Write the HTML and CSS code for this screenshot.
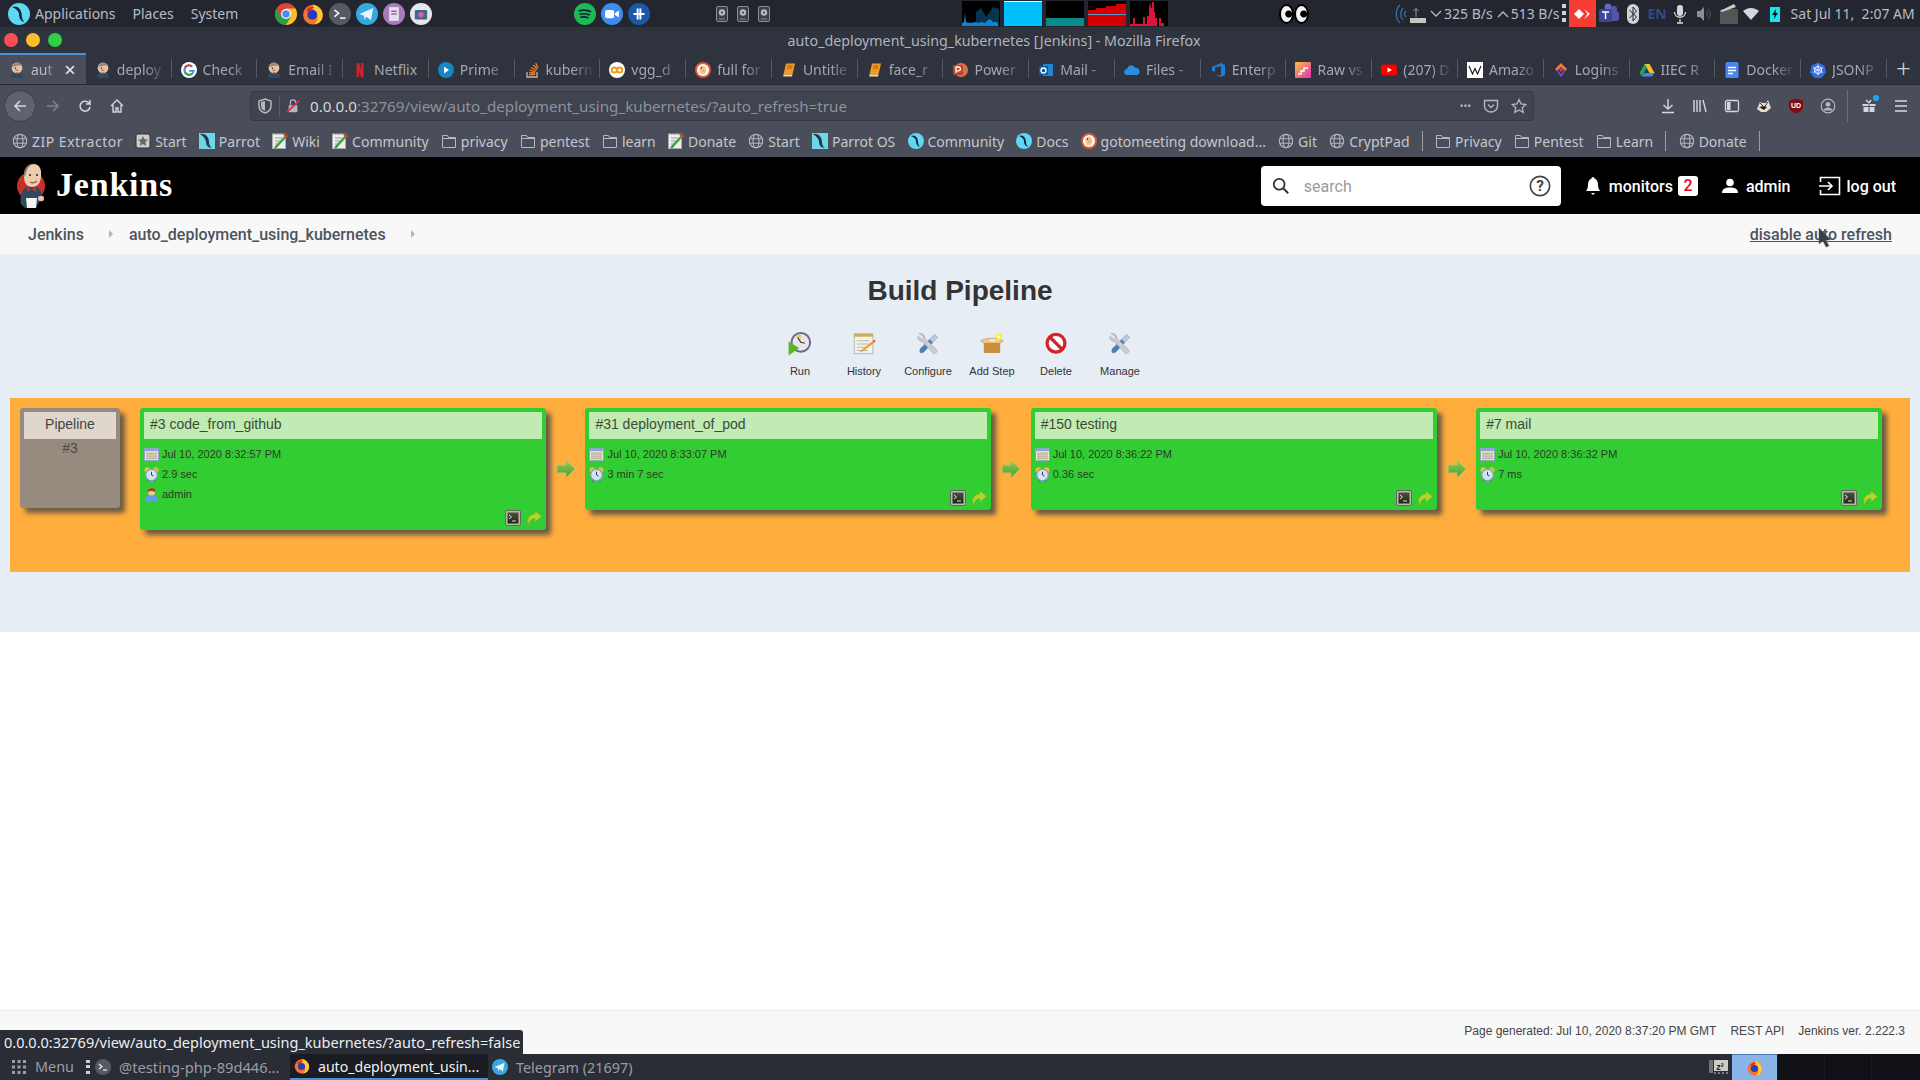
FILE: index.html
```html
<!DOCTYPE html>
<html lang="en">
<head>
<meta charset="utf-8">
<title>auto_deployment_using_kubernetes [Jenkins]</title>
<link rel="stylesheet" href="styles.css">
</head>
<body>
<svg class="defs" width="0" height="0" aria-hidden="true">
  <symbol id="firefox" viewBox="0 0 16 16"><circle cx="8" cy="8.5" r="7.2" fill="#f5742b"/><path d="M8 1c4 1 7 4 7 8 0 3-2 6-6 6.500C12 13 12 10 10 8 9 7 8 5 8 1z" fill="#ffca2e"/><circle cx="7.500" cy="8.500" r="3.600" fill="#2a3bb8"/><path d="M3 6c1-3 4-4 6-3-2 1-3 2-3 3z" fill="#e0262f"/></symbol>
  <symbol id="chrome" viewBox="0 0 16 16"><circle cx="8" cy="8" r="8" fill="#db4437"/><path d="M8 16a8 8 0 0 0 6.900-12H8z" fill="#fbc02d"/><path d="M1 4a8 8 0 0 0 7 12l3.500-6H4.500z" fill="#2e9e48"/><circle cx="8" cy="8" r="3.600" fill="#fff"/><circle cx="8" cy="8" r="2.700" fill="#4a8af4"/></symbol>
  <symbol id="term" viewBox="0 0 16 16"><circle cx="8" cy="8" r="8" fill="#565960"/><path d="M4 5l3 2.500L4 10" stroke="#eee" stroke-width="1.200" fill="none"/><path d="M8 11h4" stroke="#eee" stroke-width="1.200"/></symbol>
  <symbol id="telegram" viewBox="0 0 16 16"><circle cx="8" cy="8" r="8" fill="#36a9e1"/><path d="M2.500 8l10-4.300-1.600 8.800L7.500 10 6.200 12.200 5.800 9.300z" fill="#e8f4fb"/></symbol>
  <symbol id="notes" viewBox="0 0 16 16"><circle cx="8" cy="8" r="8" fill="#a77bbd"/><rect x="4.500" y="3" width="7" height="10" fill="#e8def0"/><path d="M6 6h4M6 8h4" stroke="#8a6a9c"/></symbol>
  <symbol id="camera" viewBox="0 0 16 16"><circle cx="8" cy="8" r="8" fill="#e7e7e7"/><rect x="3.500" y="5" width="9" height="7" rx="1" fill="#3b6a96"/><circle cx="8" cy="8.500" r="2" fill="#e35f8c"/></symbol>
  <symbol id="spotify" viewBox="0 0 16 16"><circle cx="8" cy="8" r="8" fill="#1db954"/><path d="M3.500 5.800c3-1 6-.8 9 .6M4 8.200c2.500-.7 5-.5 7.500.6M4.500 10.400c2-.5 4-.4 6 .5" stroke="#123" stroke-width="1.200" fill="none"/></symbol>
  <symbol id="zoom" viewBox="0 0 16 16"><circle cx="8" cy="8" r="8" fill="#3d8df0"/><rect x="3" y="5" width="6.500" height="6" rx="1.200" fill="#fff"/><path d="M10 7.500l3-2v5l-3-2z" fill="#fff"/></symbol>
  <symbol id="team" viewBox="0 0 16 16"><circle cx="8" cy="8" r="8" fill="#1d57a8"/><path d="M7 4v8M9 4v8M4 8h8" stroke="#fff" stroke-width="1.400"/></symbol>
  <symbol id="disk" viewBox="0 0 12 16"><rect x=".5" y=".5" width="11" height="15" rx="1.500" fill="#3b3f48" stroke="#8a8e96"/><circle cx="6" cy="6.500" r="3.200" fill="#b6b9bf"/><circle cx="6" cy="6.500" r="1" fill="#3b3f48"/><path d="M3 13h6" stroke="#8a8e96"/></symbol>
  <symbol id="parrot-round" viewBox="0 0 16 16"><circle cx="8" cy="8" r="8" fill="#5fd8f5"/><path d="M3 3c4-2 7 2 7 6 0 2 1 4 2 5-3-1-4-3-4-6 0-2-2-4-5-5z" fill="#14202c"/></symbol>
  <symbol id="parrot-square" viewBox="0 0 16 16"><rect width="16" height="16" fill="#6fd6e8"/><path d="M1 1c6-1 9 4 9 8 0 2 1 5 3 6-4 0-6-3-6-6 0-3-3-6-6-8z" fill="#1d3c4c"/></symbol>
  <symbol id="globe" viewBox="0 0 16 16"><g fill="none" stroke="#b4b7be" stroke-width="1.100"><circle cx="8" cy="8" r="6.700"/><ellipse cx="8" cy="8" rx="3" ry="6.700"/><path d="M1.500 5.800h13M1.500 10.200h13"/></g></symbol>
  <symbol id="folder" viewBox="0 0 16 16"><path d="M1.500 2.500h5l1 2h7v10h-13z" fill="none" stroke="#b4b7be"/><path d="M1.500 5.500h13" stroke="#b4b7be"/></symbol>
  <symbol id="start" viewBox="0 0 16 16"><rect x="1" y="1" width="14" height="14" rx="2" fill="#ccc" stroke="#333"/><path d="M8 3l1.500 3.300 3.500.4-2.600 2.400.7 3.600L8 11l-3.100 1.700.7-3.600L3 6.700l3.500-.4z" fill="#666"/></symbol>
  <symbol id="wiki" viewBox="0 0 16 16"><rect x="0.500" y="1" width="13" height="14.500" fill="#eee" stroke="#aaa"/><path d="M3 5h7M3 8h5M3 11h4" stroke="#999"/><path d="M3 15L14 3" stroke="#3da33d" stroke-width="2.500"/><path d="M12 .5l3.500 3.500" stroke="#d33" stroke-width="2.500"/></symbol>
  <symbol id="ddg" viewBox="0 0 16 16"><circle cx="8" cy="8" r="8" fill="#de5833"/><circle cx="8" cy="8" r="6" fill="#fff"/><ellipse cx="7.800" cy="8" rx="3.500" ry="4.500" fill="#f3c79a"/><path d="M6 8h4l-1 1.500H7z" fill="#f2a82a"/><circle cx="6.500" cy="6" r=".8" fill="#123"/></symbol>
  <symbol id="jenkins" viewBox="0 0 16 16"><path d="M2 16c0-4 2-6 6-6s6 2 6 6z" fill="#2b4a66"/><circle cx="8" cy="6" r="5.400" fill="#e3c3a5"/><path d="M3 5c1-5 9-5 10-1-3-1-6 0-10 1z" fill="#9a8473"/><path d="M6.500 10.500l1.500 2 1.500-2z" fill="#c0322d"/><circle cx="6.500" cy="6.200" r=".7" fill="#222"/><path d="M6.500 8.300h3" stroke="#a5664f"/></symbol>
  <symbol id="g" viewBox="0 0 16 16"><circle cx="8" cy="8" r="8" fill="#fff"/><path d="M14 8H8.200v1.800h3.400A3.700 3.700 0 1 1 10.500 5.300l1.300-1.300A5.600 5.600 0 1 0 13.600 9z" fill="#4a85f0"/><path d="M4.600 5.500A4 4 0 0 1 10.500 5.300l1.300-1.300A5.600 5.600 0 0 0 3 5z" fill="#e54335"/><path d="M3 10.800l1.700-1.200a4 4 0 0 0 5.800 1.500l1.300 1.300a5.600 5.600 0 0 1-8.800-1.600z" fill="#2fa84f"/></symbol>
  <symbol id="netflix" viewBox="0 0 16 16"><path d="M4.500 1h2.600l2 7V1h2.400v14.500l-2.600-.5-2-7v6.700l-2.400.3z" fill="#d81f26"/></symbol>
  <symbol id="prime" viewBox="0 0 16 16"><circle cx="8" cy="8" r="8" fill="#1487c5"/><path d="M6 4.500l5 3.500-5 3.500z" fill="#fff"/></symbol>
  <symbol id="so" viewBox="0 0 16 16"><path d="M3 10v5h10v-5" fill="none" stroke="#bbb" stroke-width="1.300"/><path d="M5 12.500h6M5.200 10.300l6 .8M5.900 8l5.600 2M7.300 5.500l5 3.200M9.400 3l3.800 4.400M11.800 1l2 5" stroke="#f48024" stroke-width="1.300"/></symbol>
  <symbol id="colab" viewBox="0 0 16 16"><circle cx="8" cy="8" r="8" fill="#fff"/><g fill="none" stroke="#f29c1f" stroke-width="2"><circle cx="5.300" cy="8" r="2.600"/><circle cx="10.700" cy="8" r="2.600"/></g></symbol>
  <symbol id="book" viewBox="0 0 16 16"><path d="M5 1.500h9l-2.500 11H2.500z" fill="#f29a25"/><path d="M2.500 12.500h9l-.5 2H2.300z" fill="#ffd9a0"/><path d="M6.500 4h5M6 6h5" stroke="#a85f10"/></symbol>
  <symbol id="ppt" viewBox="0 0 16 16"><circle cx="9" cy="8" r="7" fill="#e0703f"/><rect x="1" y="3" width="10" height="10" rx="1" fill="#b7472a"/><path d="M4 11V5h2.500a1.800 1.800 0 0 1 0 3.800H4" fill="none" stroke="#fff" stroke-width="1.300"/></symbol>
  <symbol id="outlook" viewBox="0 0 16 16"><rect x="5" y="2" width="10" height="12" fill="#1f86d6"/><rect x="1" y="4" width="9" height="9" fill="#0f5fa8"/><circle cx="5.500" cy="8.500" r="2.500" fill="none" stroke="#fff" stroke-width="1.300"/></symbol>
  <symbol id="cloud" viewBox="0 0 16 16"><path d="M3.500 13A3 3 0 0 1 3 7a4.500 4.500 0 0 1 8.500-1A3.500 3.500 0 0 1 12.500 13z" fill="#2a8fe0"/></symbol>
  <symbol id="azure" viewBox="0 0 16 16"><path d="M15 3v10l-4 2-6-2 6 .8V4L5 5.500V10l-3-1.200V5l9-4z" fill="#1f7fd4"/></symbol>
  <symbol id="raw" viewBox="0 0 16 16"><defs><linearGradient id="rg" x1="0" y1="0" x2="1" y2="1"><stop offset="0" stop-color="#f9c33a"/><stop offset="1" stop-color="#e22fb8"/></linearGradient></defs><rect width="16" height="16" rx="1" fill="url(#rg)"/><path d="M3 12h3V9h3V6h4" stroke="#fff" stroke-width="1.400" fill="none"/></symbol>
  <symbol id="yt" viewBox="0 0 16 16"><rect y="2.500" width="16" height="11" rx="3" fill="#f00"/><path d="M6.500 5.500l4.500 2.500-4.500 2.500z" fill="#fff"/></symbol>
  <symbol id="wikip" viewBox="0 0 16 16"><rect width="16" height="16" fill="#fff"/><path d="M2 4l3.500 8L8 6.500 10.500 12 14 4" fill="none" stroke="#111" stroke-width="1.100"/></symbol>
  <symbol id="logins" viewBox="0 0 16 16"><path d="M8 1l6 6-2 2-4-4-4 4-2-2z" fill="#f27a3a"/><path d="M2 7l6 8 6-8-2 1-4 4-4-4z" fill="#6c52d9"/><circle cx="8" cy="8" r="1.800" fill="#e0323c"/></symbol>
  <symbol id="drive" viewBox="0 0 16 16"><path d="M5.500 2h5l5 9h-5z" fill="#f6c02d"/><path d="M5.500 2L.5 11l2.500 3.500 5-9z" fill="#1fa463"/><path d="M3 14.500h10l2.500-3.500H5.500z" fill="#4a85f0"/></symbol>
  <symbol id="docs" viewBox="0 0 16 16"><rect x="1.500" width="13" height="16" rx="1.500" fill="#4a85f0"/><path d="M4 5.500h8M4 8.500h8M4 11.500h5" stroke="#fff" stroke-width="1.500"/></symbol>
  <symbol id="k8s" viewBox="0 0 16 16"><path d="M8 .5l6.500 3 1.500 7-4.500 5.500h-7L0 10.500l1.500-7z" fill="#326de6"/><circle cx="8" cy="8" r="3.500" fill="none" stroke="#fff"/><path d="M8 2.500v11M3 5.500l10 5M13 5.500l-10 5" stroke="#fff" stroke-width=".8"/></symbol>
  <symbol id="chev" viewBox="0 0 12 8"><path d="M1 1l5 5 5-5" fill="none" stroke="#b8bcc5" stroke-width="1.300"/></symbol>
  <symbol id="cal" viewBox="0 0 16 16"><rect x=".5" y="1.500" width="15" height="13" fill="#f3efe2" stroke="#8da0c4"/><rect x=".5" y="1.500" width="15" height="3" fill="#8fa3d0"/><path d="M2 6.500h12M2 8.500h12M2 10.500h12M2 12.500h12" stroke="#a09577"/></symbol>
  <symbol id="clock" viewBox="0 0 16 16"><path d="M4 15.500l1.500-3M12 15.500l-1.500-3" stroke="#4a6a94" stroke-width="1.500"/><circle cx="3.500" cy="3.200" r="3" fill="#f0b93a"/><circle cx="12.500" cy="3.200" r="3" fill="#f0b93a"/><circle cx="8" cy="8.500" r="6.200" fill="#d4e3f2" stroke="#7ea0c8" stroke-width="1.400"/><path d="M8 5v3.500l2 1.200" stroke="#333" fill="none"/></symbol>
  <symbol id="user" viewBox="0 0 16 16"><path d="M1 15.500c0-5 2-7.500 7-7.500s7 2.500 7 7.500z" fill="#5f9ee6"/><circle cx="8" cy="5" r="4" fill="#eec29a"/><path d="M3.800 5.500C3 0 13-1 12.200 5.500 10 3.800 6 3.800 3.800 5.500z" fill="#8a4a1c"/></symbol>
  <symbol id="console" viewBox="0 0 16 16"><defs><linearGradient id="cg" x1="0" y1="0" x2="0" y2="1"><stop offset="0" stop-color="#4a5530"/><stop offset="1" stop-color="#1e2412"/></linearGradient></defs><rect x=".5" y=".5" width="15" height="15" rx="1.500" fill="#b9bab2" stroke="#666"/><rect x="2.500" y="2.500" width="11" height="11" fill="url(#cg)"/><path d="M4 5l2.500 2L4 9" stroke="#ddd" fill="none"/><path d="M7 11h4" stroke="#ddd"/></symbol>
  <symbol id="rerun" viewBox="0 0 16 16"><path d="M9 1L15.500 6.500 9 12V8.500C6 8.500 3.500 10.500 2.500 15 0 8.500 4 4 9 4z" fill="#b3d62e" stroke="#86b41f" stroke-width=".7"/></symbol>
  <symbol id="flow" viewBox="0 0 20 20"><defs><linearGradient id="fg" x1="0" y1="0" x2="0" y2="1"><stop offset="0" stop-color="#93cc5e"/><stop offset="1" stop-color="#4c9a28"/></linearGradient></defs><path d="M1 6h9V1l9 9-9 9v-5H1z" fill="url(#fg)" stroke="#b3c46c"/></symbol>
  <symbol id="wrench" viewBox="0 0 32 32"><path d="M24 4l4 4-16 17c-1 2-5 3-6 1s0-5 2-6z" fill="#4c80ba"/><path d="M24 4l4 4-6 6-4-4z" fill="#c3c8ce"/><path d="M5 3c4-1 8 2 7 6l15 14c1 3-2 6-5 4L9 13C5 13 2 9 4 6l4 4 3-3z" fill="#c9ccd0" stroke="#9ba0a6" stroke-width=".6"/></symbol>
</svg>

<div class="screen">
  <header class="panel">
    <div class="panel-menu">
      <svg class="logo-parrot"><use href="#parrot-round"/></svg>
      <span>Applications</span><span>Places</span><span>System</span>
    </div>
    <div class="launch launch-a">
      <svg class="i22"><use href="#chrome"/></svg><svg class="i22"><use href="#firefox"/></svg><svg class="i22"><use href="#term"/></svg><svg class="i22"><use href="#telegram"/></svg><svg class="i22"><use href="#notes"/></svg><svg class="i22"><use href="#camera"/></svg>
    </div>
    <div class="launch launch-b">
      <svg class="i22"><use href="#spotify"/></svg><svg class="i22"><use href="#zoom"/></svg><svg class="i22"><use href="#team"/></svg>
    </div>
    <div class="disks">
      <svg class="disk"><use href="#disk"/></svg><svg class="disk"><use href="#disk"/></svg><svg class="disk"><use href="#disk"/></svg>
    </div>
    <div class="graphs">
      <svg class="graph" viewBox="0 0 38 25"><path d="M14 22V11l5-4 5 9 7-10 6 2v17z" fill="#0e5f8c" opacity=".55"/><path d="M0 25V22l2-1 1-9 1 9 4 1 6-1 2 1 4-1 3 1 3-3 2-1 3 3 3 0 2 1v3z" fill="#0e83d0"/></svg>
      <svg class="graph graph-blue" viewBox="0 0 38 25"><rect width="38" height="24" y="1" fill="#00bfff"/></svg>
      <svg class="graph" viewBox="0 0 38 25"><rect y="17" width="38" height="8" fill="#0b8a8a"/></svg>
      <svg class="graph" viewBox="0 0 38 25"><path d="M0 9h8V7h10V5h10V3h10v22H0z" fill="#d40000"/><rect y="13" width="38" height="1" fill="#5a9ad0"/></svg>
      <svg class="graph" viewBox="0 0 38 25"><path d="M0 25V23h3v-6h2v6h8v-7h2v7h2v-8h2V7l1-6 1 6h1V1h2v10h1v6h2v8h2v-8h2v5h3v4h2v2z" fill="#dc143c"/></svg>
    </div>
    <div class="eyes"><span class="eye"></span><span class="eye"></span></div>
    <div class="tray">
      <svg class="tray-signal" viewBox="0 0 34 24"><path d="M8 3c-5 5-5 13 0 18M11 6c-3 4-3 9 0 12M14 9c-2 2-2 4 0 6" stroke="#3a6ea8" stroke-width="1.300" fill="none"/><rect x="18" y="16" width="16" height="5" fill="#c3c6b8"/><path d="M24 15V6M21 9c2-2 4-2 6 0" stroke="#999" fill="none"/></svg>
      <svg class="chev"><use href="#chev"/></svg><span>325 B/s</span>
      <svg class="chev chev-up"><use href="#chev"/></svg><span>513 B/s</span>
      <span class="tray-dots"></span>
      <span class="anydesk"><svg viewBox="0 0 20 12" class="anydesk-mark"><path d="M6 1l5 5-5 5-5-5z" fill="#fff"/><path d="M11 1l6 5-6 5 3.500-5z" fill="#fff"/></svg></span>
      <svg class="tray-teams" viewBox="0 0 22 22"><circle cx="16" cy="6" r="3" fill="#4f58a8"/><circle cx="10" cy="4" r="3.500" fill="#5f68c0"/><rect x="11" y="8" width="10" height="10" rx="3" fill="#4f58a8"/><rect x="1" y="6" width="13" height="13" rx="1.500" fill="#3d4696"/><path d="M4 9h7M7.500 9v7" stroke="#fff" stroke-width="1.400"/></svg>
      <svg class="tray-bt" viewBox="0 0 12 20"><rect width="12" height="20" rx="6" fill="#cfd1d6"/><path d="M2.500 6l7 7-3.500 4V3l3.500 4-7 7" fill="none" stroke="#23262e"/></svg>
      <b class="tray-en">EN</b>
      <svg class="tray-mic" viewBox="0 0 14 20"><rect x="4" y="1" width="6" height="11" rx="3" fill="#d5d7dc"/><path d="M1.500 8c0 7 11 7 11 0M7 15v4M4 19h6" stroke="#d5d7dc" fill="none" stroke-width="1.300"/></svg>
      <svg class="tray-vol" viewBox="0 0 16 16"><path d="M1 5h3l4-4v14l-4-4H1z" fill="#8a8d94"/><path d="M10 5c2 2 2 4 0 6M12 3c3 3 3 7 0 10" stroke="#5c5f66" fill="none"/></svg>
      <svg class="tray-hist" viewBox="0 0 18 20"><rect y="5" width="18" height="15" rx="1.500" fill="#555"/><path d="M0 7L14 0l2 3-14 5z" fill="#ccc"/></svg>
      <svg class="tray-wifi" viewBox="0 0 16 12"><path d="M0 3c5-4 11-4 16 0l-8 9z" fill="#d5d7dc"/></svg>
      <svg class="tray-batt" viewBox="0 0 10 16"><rect y="1" width="10" height="15" fill="#15e6ee"/><path d="M6 3L2 9h2.500L4 13l4-6H5.500z" fill="#111"/></svg>
      <span class="tray-date">Sat Jul 11, &nbsp;2:07 AM</span>
    </div>
  </header>

  <div class="titlebar">
    <div class="lights"><i class="light red"></i><i class="light yellow"></i><i class="light green"></i></div>
    <div class="win-title">auto_deployment_using_kubernetes [Jenkins] - Mozilla Firefox</div>
    <div></div>
  </div>

  <nav class="tabs">
    <div class="tab tab-active"><svg class="i16"><use href="#jenkins"/></svg><span class="tab-label">aut</span><span class="tab-close">×</span></div>
    <div class="tab"><svg class="i16"><use href="#jenkins"/></svg><span class="tab-label">deploy</span></div>
    <div class="tab"><svg class="i16"><use href="#g"/></svg><span class="tab-label">Check</span></div>
    <div class="tab"><svg class="i16"><use href="#jenkins"/></svg><span class="tab-label">Email I</span></div>
    <div class="tab"><svg class="i16"><use href="#netflix"/></svg><span class="tab-label tab-plain">Netflix</span></div>
    <div class="tab"><svg class="i16"><use href="#prime"/></svg><span class="tab-label">Prime</span></div>
    <div class="tab"><svg class="i16"><use href="#so"/></svg><span class="tab-label">kubern</span></div>
    <div class="tab"><svg class="i16"><use href="#colab"/></svg><span class="tab-label">vgg_d</span></div>
    <div class="tab"><svg class="i16"><use href="#ddg"/></svg><span class="tab-label">full for</span></div>
    <div class="tab"><svg class="i16"><use href="#book"/></svg><span class="tab-label">Untitle</span></div>
    <div class="tab"><svg class="i16"><use href="#book"/></svg><span class="tab-label">face_r</span></div>
    <div class="tab"><svg class="i16"><use href="#ppt"/></svg><span class="tab-label">Power</span></div>
    <div class="tab"><svg class="i16"><use href="#outlook"/></svg><span class="tab-label">Mail -</span></div>
    <div class="tab"><svg class="i16"><use href="#cloud"/></svg><span class="tab-label">Files -</span></div>
    <div class="tab"><svg class="i16"><use href="#azure"/></svg><span class="tab-label">Enterp</span></div>
    <div class="tab"><svg class="i16"><use href="#raw"/></svg><span class="tab-label">Raw vs</span></div>
    <div class="tab"><svg class="i16"><use href="#yt"/></svg><span class="tab-label">(207) D</span></div>
    <div class="tab"><svg class="i16"><use href="#wikip"/></svg><span class="tab-label">Amazo</span></div>
    <div class="tab"><svg class="i16"><use href="#logins"/></svg><span class="tab-label">Logins</span></div>
    <div class="tab"><svg class="i16"><use href="#drive"/></svg><span class="tab-label">IIEC R</span></div>
    <div class="tab"><svg class="i16"><use href="#docs"/></svg><span class="tab-label">Docker</span></div>
    <div class="tab"><svg class="i16"><use href="#k8s"/></svg><span class="tab-label">JSONP</span></div>
    <div class="tab-new">+</div>
  </nav>

  <div class="navbar">
    <span class="back"><svg viewBox="0 0 16 16" class="nav-i"><path d="M14 8H3M8 3L3 8l5 5" fill="none" stroke="#d5d7dc" stroke-width="1.600"/></svg></span>
    <svg viewBox="0 0 16 16" class="nav-i nav-dim"><path d="M2 8h11M8 3l5 5-5 5" fill="none" stroke="#80838c" stroke-width="1.600"/></svg>
    <svg viewBox="0 0 16 16" class="nav-i"><path d="M13 9a5 5 0 1 1-1.500-4.500L13 6V2M13 6H9" fill="none" stroke="#d5d7dc" stroke-width="1.500"/></svg>
    <svg viewBox="0 0 16 16" class="nav-i"><path d="M2 8l6-6 6 6M4 7v7h3v-4h2v4h3V7" fill="none" stroke="#d5d7dc" stroke-width="1.400"/></svg>
    <div class="urlbar">
      <svg viewBox="0 0 16 16" class="url-shield"><path d="M8 1l6 2v5c0 4-3 6-6 7-3-1-6-3-6-7V3z" fill="none" stroke="#b4b7be" stroke-width="1.500"/><path d="M8 3v10c-2-1-4-2-4-5V4z" fill="#b4b7be"/></svg>
      <span class="url-sep"></span>
      <svg viewBox="0 0 16 16" class="url-lock"><rect x="3" y="7" width="10" height="8" rx="1" fill="#b4b7be"/><path d="M5 7V4a3 3 0 0 1 6 0v3" stroke="#b4b7be" fill="none" stroke-width="1.400"/><path d="M1 15L15 2" stroke="#e22850" stroke-width="2"/></svg>
      <span class="url-text"><span class="url-host">0.0.0.0</span>:32769/view/auto_deployment_using_kubernetes/?auto_refresh=true</span>
      <span class="url-more">•••</span>
      <svg viewBox="0 0 16 16" class="url-act"><path d="M1.500 2.500h13V8a6.500 6 0 0 1-13 0z" fill="none" stroke="#b4b7be" stroke-width="1.400"/><path d="M5 6.500l3 3 3-3" fill="none" stroke="#b4b7be" stroke-width="1.400"/></svg>
      <svg viewBox="0 0 16 16" class="url-act"><path d="M8 1.500l2 4.500 4.800.5-3.600 3.200 1 4.800L8 12l-4.200 2.500 1-4.800L1.200 6.500 6 6z" fill="none" stroke="#b4b7be" stroke-width="1.300"/></svg>
    </div>
    <div class="tools">
      <svg viewBox="0 0 16 16" class="tool"><path d="M8 1v10M3.500 7L8 11l4.500-4M2 14.500h12" fill="none" stroke="#d5d7dc" stroke-width="1.400"/></svg>
      <svg viewBox="0 0 16 16" class="tool"><path d="M2 2v12M5 2v12M8 2v12M11 2l3 12" fill="none" stroke="#d5d7dc" stroke-width="1.400"/></svg>
      <svg viewBox="0 0 16 16" class="tool"><rect x="1.500" y="2.500" width="13" height="11" rx="1.500" fill="none" stroke="#d5d7dc" stroke-width="1.300"/><rect x="3" y="4" width="3.500" height="8" fill="#d5d7dc"/></svg>
      <svg viewBox="0 0 16 16" class="tool"><path d="M1 11L4 4l2 1h4l2-3 3 8-5 4H5z" fill="#e8e0cf"/><path d="M3 9l5-1 3 1-3 3z" fill="#222"/><path d="M4 5l3 3M12 4L9 8" stroke="#333"/></svg>
      <svg viewBox="0 0 16 16" class="tool"><path d="M8 .5l7 2.300V9c0 3-3 5-7 6.500C4 14 1 12 1 9V2.800z" fill="#7d0f13"/><text x="8" y="10" class="ublock">UD</text></svg>
      <svg viewBox="0 0 16 16" class="tool"><circle cx="8" cy="8" r="6.800" fill="none" stroke="#b4b7be" stroke-width="1.200"/><circle cx="8" cy="6.300" r="2.400" fill="#b4b7be"/><path d="M3.500 12.500c1-4 8-4 9 0z" fill="#b4b7be"/></svg>
      <span class="tool-sep"></span>
      <span class="gift"><svg viewBox="0 0 16 16" class="tool"><path d="M1.500 6h6v2h-6zM8.500 6h6v2h-6zM2.500 9h5v5h-5zM8.500 9h5v5h-5z" fill="#d5d7dc"/><path d="M8 5L5 2M8 5l2-3" stroke="#d5d7dc" stroke-width="1.400"/></svg><i class="gift-dot"></i></span>
      <svg viewBox="0 0 16 16" class="tool"><path d="M2 3h12M2 8h12M2 13h12" stroke="#d5d7dc" stroke-width="1.500"/></svg>
    </div>
  </div>

  <div class="bookmarks">
    <span class="bm bm-zip"><svg class="i16"><use href="#globe"/></svg>ZIP Extractor</span>
    <span class="bm"><svg class="i16"><use href="#start"/></svg>Start</span>
    <span class="bm"><svg class="i16"><use href="#parrot-square"/></svg>Parrot</span>
    <span class="bm"><svg class="i16"><use href="#wiki"/></svg>Wiki</span>
    <span class="bm"><svg class="i16"><use href="#wiki"/></svg>Community</span>
    <span class="bm"><svg class="i16"><use href="#folder"/></svg>privacy</span>
    <span class="bm"><svg class="i16"><use href="#folder"/></svg>pentest</span>
    <span class="bm"><svg class="i16"><use href="#folder"/></svg>learn</span>
    <span class="bm"><svg class="i16"><use href="#wiki"/></svg>Donate</span>
    <span class="bm"><svg class="i16"><use href="#globe"/></svg>Start</span>
    <span class="bm"><svg class="i16"><use href="#parrot-square"/></svg>Parrot OS</span>
    <span class="bm"><svg class="i16"><use href="#parrot-round"/></svg>Community</span>
    <span class="bm"><svg class="i16"><use href="#parrot-round"/></svg>Docs</span>
    <span class="bm"><svg class="i16"><use href="#ddg"/></svg>gotomeeting download...</span>
    <span class="bm"><svg class="i16"><use href="#globe"/></svg>Git</span>
    <span class="bm"><svg class="i16"><use href="#globe"/></svg>CryptPad</span>
    <i class="bm-sep"></i>
    <span class="bm"><svg class="i16"><use href="#folder"/></svg>Privacy</span>
    <span class="bm"><svg class="i16"><use href="#folder"/></svg>Pentest</span>
    <span class="bm"><svg class="i16"><use href="#folder"/></svg>Learn</span>
    <i class="bm-sep"></i>
    <span class="bm"><svg class="i16"><use href="#globe"/></svg>Donate</span>
    <i class="bm-sep"></i>
  </div>

  <div class="jk-header">
    <svg class="jk-logo" viewBox="0 0 30 46">
      <circle cx="15" cy="23" r="14" fill="#c5302a"/>
      <path d="M5 41c-2-9 2-18 10-18s12 6 12 15l-4 1-3 6H9z" fill="#2f4a60"/>
      <path d="M8 14C8 5 13 1 18 1s8 5 7 12c0 6-3 11-9 11-5 0-8-4-8-10z" fill="#eccdb0"/>
      <path d="M8 14C7 5 13 0 18 1c-4 1-6 3-7 6-1 2-1 5-3 7z" fill="#8f7a6b"/>
      <circle cx="14" cy="12" r="1" fill="#222"/><circle cx="21" cy="12" r="1" fill="#222"/>
      <path d="M14 19c2 1 5 1 7-1" stroke="#9b5b46" fill="none" stroke-width="1.200"/>
      <path d="M15 26l-4-2v5zM15 26l5-2v5z" fill="#c5302a"/>
      <path d="M10 35h11l-1 10H11z" fill="#f4f4f0"/>
      <rect x="22" y="33" width="6" height="5" rx="2" fill="#e9c7ab"/>
    </svg>
    <span class="jk-brand">Jenkins</span>
    <div class="jk-search">
      <svg viewBox="0 0 20 20" class="jk-search-i"><circle cx="8" cy="8" r="6" fill="none" stroke="#333" stroke-width="2"/><path d="M12.500 12.500L18 18" stroke="#333" stroke-width="2.200"/></svg>
      <span class="jk-placeholder">search</span>
      <svg viewBox="0 0 20 20" class="jk-help"><circle cx="10" cy="10" r="8.800" fill="none" stroke="#444" stroke-width="1.500"/><text x="10" y="14.500" class="jk-help-q">?</text></svg>
    </div>
    <div class="jk-links">
      <span class="jk-link jk-monitors"><svg viewBox="0 0 16 20" class="jk-i"><path d="M8 1c1 0 1.500.8 1.500 1.500C12 3.500 13 6 13 9c0 3 1 4.500 2 6H1c1-1.500 2-3 2-6 0-3 1-5.500 3.500-6.500C6.500 1.800 7 1 8 1z" fill="#fff"/><path d="M6 17h4l-2 2z" fill="#fff"/></svg>monitors<span class="jk-badge">2</span></span>
      <span class="jk-link jk-admin"><svg viewBox="0 0 16 16" class="jk-i"><circle cx="8" cy="4.500" r="3.800" fill="#fff"/><path d="M0 15c0-4 3-5.500 8-5.500s8 1.500 8 5.500z" fill="#fff"/></svg>admin</span>
      <span class="jk-link jk-logout"><svg viewBox="0 0 22 20" class="jk-i-out"><path d="M1.500 6V1.500h19v17h-19V14" fill="none" stroke="#fff" stroke-width="1.600"/><path d="M0 10h13M9 6l4 4-4 4" fill="none" stroke="#fff" stroke-width="1.600"/></svg>log out</span>
    </div>
  </div>

  <div class="crumbs">
    <a class="crumb">Jenkins</a><i class="crumb-arrow"></i>
    <a class="crumb">auto_deployment_using_kubernetes</a><i class="crumb-arrow"></i>
    <a class="crumb-right">disable auto refresh</a>
    <svg class="cursor" viewBox="0 0 12 20"><path d="M1 0v16l4-3 3 6 3-1-3-6h5z" fill="#3a3d42" stroke="#666" stroke-width=".5"/></svg>
  </div>

  <main class="content">
    <h1 class="pl-title">Build Pipeline</h1>
    <div class="actions">
      <div class="action">
        <svg viewBox="0 0 32 32" class="action-i"><circle cx="17" cy="14" r="11.500" fill="#e8e6ea" stroke="#6b6a8e" stroke-width="2.500"/><path d="M17 14L11 6a10 10 0 0 1 6-2z" fill="#e8c96a"/><path d="M13 8l4 6 5 1" stroke="#333" fill="none" stroke-width="1.300"/><path d="M2 13l13 8-13 9z" fill="#56b81e"/></svg>
        <span>Run</span>
      </div>
      <div class="action">
        <svg viewBox="0 0 32 32" class="action-i"><rect x="4" y="4" width="23" height="24" fill="#f4f1e8" stroke="#aaa"/><rect x="4" y="3" width="23" height="4" fill="#c8ae55"/><path d="M7 12h16M7 16h16M7 20h10M7 24h14" stroke="#aaa"/><path d="M13 23l-2 3 4-1 14-11-2-2z" fill="#e8a23a"/><path d="M27 12l2 2 1-2-1-1z" fill="#d33"/></svg>
        <span>History</span>
      </div>
      <div class="action">
        <svg class="action-i"><use href="#wrench"/></svg>
        <span>Configure</span>
      </div>
      <div class="action">
        <svg viewBox="0 0 32 32" class="action-i"><path d="M6 13h20v14H6z" fill="#d9a45a"/><path d="M2 12l8-3h12l8 3-4 3H6z" fill="#efc98c" stroke="#a97a38" stroke-width=".6"/><rect x="6" y="15" width="20" height="12" fill="#c98e3e"/><rect x="13" y="10" width="7" height="3" fill="#f7e7c5"/><circle cx="24" cy="7" r="4" fill="#f7ea3c"/><circle cx="24" cy="7" r="2" fill="#fffbd0"/></svg>
        <span>Add Step</span>
      </div>
      <div class="action">
        <svg viewBox="0 0 32 32" class="action-i"><circle cx="16" cy="15" r="11" fill="#fff" stroke="#d3232a" stroke-width="4"/><path d="M9 8l14 14" stroke="#d3232a" stroke-width="4"/></svg>
        <span>Delete</span>
      </div>
      <div class="action">
        <svg class="action-i"><use href="#wrench"/></svg>
        <span>Manage</span>
      </div>
    </div>

    <section class="pipeline">
      <div class="pl-head">
        <div class="pl-head-title">Pipeline</div>
        <div class="pl-head-num">#3</div>
      </div>
      <div class="pl-stages">
        <article class="stage stage-tall">
          <div class="stage-title">#3 code_from_github</div>
          <div class="stage-row"><svg class="i15"><use href="#cal"/></svg>Jul 10, 2020 8:32:57 PM</div>
          <div class="stage-row"><svg class="i15"><use href="#clock"/></svg>2.9 sec</div>
          <div class="stage-row"><svg class="i15"><use href="#user"/></svg>admin</div>
          <div class="stage-icons"><svg class="i16"><use href="#console"/></svg><svg class="i16"><use href="#rerun"/></svg></div>
        </article>
        <svg class="flow"><use href="#flow"/></svg>
        <article class="stage">
          <div class="stage-title">#31 deployment_of_pod</div>
          <div class="stage-row"><svg class="i15"><use href="#cal"/></svg>Jul 10, 2020 8:33:07 PM</div>
          <div class="stage-row"><svg class="i15"><use href="#clock"/></svg>3 min 7 sec</div>
          <div class="stage-icons"><svg class="i16"><use href="#console"/></svg><svg class="i16"><use href="#rerun"/></svg></div>
        </article>
        <svg class="flow"><use href="#flow"/></svg>
        <article class="stage">
          <div class="stage-title">#150 testing</div>
          <div class="stage-row"><svg class="i15"><use href="#cal"/></svg>Jul 10, 2020 8:36:22 PM</div>
          <div class="stage-row"><svg class="i15"><use href="#clock"/></svg>0.36 sec</div>
          <div class="stage-icons"><svg class="i16"><use href="#console"/></svg><svg class="i16"><use href="#rerun"/></svg></div>
        </article>
        <svg class="flow"><use href="#flow"/></svg>
        <article class="stage">
          <div class="stage-title">#7 mail</div>
          <div class="stage-row"><svg class="i15"><use href="#cal"/></svg>Jul 10, 2020 8:36:32 PM</div>
          <div class="stage-row"><svg class="i15"><use href="#clock"/></svg>7 ms</div>
          <div class="stage-icons"><svg class="i16"><use href="#console"/></svg><svg class="i16"><use href="#rerun"/></svg></div>
        </article>
      </div>
    </section>
  </main>

  <div class="blank"></div>

  <footer class="jk-footer">
    <span>Page generated: Jul 10, 2020 8:37:20 PM GMT</span><span>REST API</span><span>Jenkins ver. 2.222.3</span>
  </footer>

  <div class="taskbar">
    <svg class="task-grid" viewBox="0 0 14 14"><g fill="#9a9da5"><rect width="3" height="3"/><rect x="5.500" width="3" height="3"/><rect x="11" width="3" height="3"/><rect y="5.500" width="3" height="3"/><rect x="5.500" y="5.500" width="3" height="3"/><rect x="11" y="5.500" width="3" height="3"/><rect y="11" width="3" height="3"/><rect x="5.500" y="11" width="3" height="3"/><rect x="11" y="11" width="3" height="3"/></g></svg>
    <span class="task-menu">Menu</span>
    <span class="task-dots"></span>
    <span class="task task-first"><svg class="i16"><use href="#term"/></svg>@testing-php-89d446...</span>
    <span class="task task-active"><svg class="i16"><use href="#firefox"/></svg>auto_deployment_usin...</span>
    <span class="task"><svg class="i16"><use href="#telegram"/></svg>Telegram (21697)</span>
    <div class="task-right">
      <svg class="task-sleep" viewBox="0 0 20 16"><path d="M1 1v13M3 1v13" stroke="#bbb"/><rect x="5" y="1" width="14" height="11" fill="#ccc"/><text x="11" y="10.500" class="task-z">z²</text><path d="M6 13v2M10 13v2M14 13v2M18 13v2" stroke="#ccc"/></svg>
      <span class="ws ws-active"><svg class="i16"><use href="#firefox"/></svg></span>
      <span class="ws"></span><span class="ws"></span><span class="ws ws-last"></span>
    </div>
  </div>

  <div class="status-tip">0.0.0.0:32769/view/auto_deployment_using_kubernetes/?auto_refresh=false</div>
</div>
</body>
</html>
```
FILE: styles.css
```css
* { box-sizing: border-box; }
html, body { margin: 0; padding: 0; height: 100%; overflow: hidden; }
body { font-family: "Liberation Sans", Arial, sans-serif; color: #333; background: #fff; }
.defs { position: absolute; }
.screen { position: relative; width: 1920px; height: 1080px; display: flex; flex-direction: column; overflow: hidden; }
svg { display: block; flex: none; }
.i15 { width: 15px; height: 15px; }
.i16 { width: 16px; height: 16px; }
.i22 { width: 22px; height: 22px; }

/* OS panel */
.panel { height: 27px; flex: none; background: #23262e; color: #b8bcc5; display: flex; align-items: center; font: 14px "Noto Sans", sans-serif; }
.panel-menu { width: 275px; display: flex; align-items: center; padding-left: 8px; gap: 17px; }
.logo-parrot { width: 22px; height: 22px; margin-right: -12px; }
.launch { display: flex; gap: 5px; }
.launch-a { width: 299px; }
.launch-b { width: 138px; }
.disks { width: 250px; display: flex; gap: 9px; padding-left: 4px; }
.disk { width: 12px; height: 16px; }
.graphs { width: 314px; display: flex; gap: 4px; align-self: flex-start; padding-top: 1px; }
.graph { width: 38px; height: 25px; background: #000; }
.graph-blue { background: #e8f8ff; }
.eyes { width: 114px; display: flex; gap: 0; padding-left: 3px; }
.eye { width: 15px; height: 20px; border-radius: 50%; background: radial-gradient(circle at 70% 50%, #000 0 3px, #f4f4f4 4px); border: 2px solid #000; }
.tray { flex: 1; display: flex; align-items: center; }
.tray-signal { width: 34px; height: 24px; margin: 0 4px 0 2px; }
.chev { width: 12px; height: 8px; margin-right: 2px; }
.chev-up { transform: rotate(180deg); margin-left: 4px; }
.tray-dots { width: 4px; height: 20px; margin: 0 3px 0 3px; background: repeating-linear-gradient(#cfd1d6 0 4px, transparent 4px 7px); }
.anydesk { width: 27px; height: 27px; background: #f63c33; display: flex; align-items: center; justify-content: center; }
.anydesk-mark { width: 20px; height: 12px; }
.tray-teams { width: 22px; height: 22px; margin-left: 2px; }
.tray-bt { width: 12px; height: 20px; margin-left: 7px; }
.tray-en { color: #2f4a86; margin-left: 8px; font-size: 14px; }
.tray-mic { width: 14px; height: 20px; margin-left: 6px; }
.tray-vol { width: 16px; height: 16px; margin-left: 9px; }
.tray-hist { width: 18px; height: 20px; margin-left: 8px; }
.tray-wifi { width: 16px; height: 12px; margin-left: 5px; }
.tray-batt { width: 10px; height: 16px; margin-left: 11px; }
.tray-date { margin-left: 11px; white-space: nowrap; }

/* Firefox chrome */
.titlebar { height: 26px; flex: none; background: #2f333e; display: grid; grid-template-columns: 1fr auto 1fr; align-items: center; color: #b0b4bd; font: 14.250px "Noto Sans", sans-serif; }
.lights { display: flex; gap: 8px; padding-left: 4px; }
.light { width: 14px; height: 14px; border-radius: 50%; }
.red { background: #fb4f53; }
.yellow { background: #fbbd2e; }
.green { background: #2fcf48; }
.win-title { margin-left: 68px; }
.tabs { height: 32px; flex: none; background: #2f333e; display: flex; align-items: stretch; font: 14px "Noto Sans", sans-serif; color: #a4a8b2; border-bottom: 1px solid #24272e; }
.tab { flex: 0 0 85.770px; min-width: 0; display: flex; align-items: center; gap: 6px; padding: 2px 5px 0 9px; position: relative; }
.tab::after { content: ""; position: absolute; right: 0; top: 6px; bottom: 6px; width: 1px; background: #555964; }
.tab-active { background: #4a4e5a; border-top: 2px solid #4a90d9; padding-top: 0; color: #b8bcc5; padding-right: 10px; }
.tab-active::after { display: none; }
.tab-label { flex: 1; min-width: 0; white-space: nowrap; -webkit-mask-image: linear-gradient(to right, #000 55%, transparent 100%); mask-image: linear-gradient(to right, #000 55%, transparent 100%); }
.tab-plain { -webkit-mask-image: none; mask-image: none; }
.tab-close { color: #e4e6ea; font-size: 20px; line-height: 1; }
.tab-new { flex: 1; color: #cfd1d6; font-size: 26px; line-height: 30px; text-align: center; font-weight: 300; }
.navbar { height: 40px; flex: none; background: #4a4e5a; display: flex; align-items: center; padding: 2px 0 0 4px; }
.back { width: 32px; height: 32px; border-radius: 50%; background: #5f636e; border: 1px solid #3c3f48; display: flex; align-items: center; justify-content: center; margin-right: 9px; }
.nav-i { width: 16px; height: 16px; margin-right: 16px; }
.back .nav-i { margin: 0; }
.urlbar { margin-left: 109px; width: 1284px; height: 30px; background: #40444f; border: 1px solid #363943; border-radius: 4px; display: flex; align-items: center; padding: 0 6px 0 6px; color: #8e929c; font: 15.200px "Noto Sans", sans-serif; }
.url-shield { width: 16px; height: 16px; }
.url-sep { width: 1px; height: 20px; background: #5a5e69; margin: 0 6px; }
.url-lock { width: 14px; height: 16px; margin-right: 10px; }
.url-text { flex: 1; white-space: nowrap; }
.url-host { color: #d5d7dc; }
.url-more { color: #b4b7be; font-size: 10px; }
.url-act { width: 16px; height: 16px; margin-left: 12px; }
.tools { margin-left: 126px; display: flex; align-items: center; gap: 16px; }
.tool { width: 16px; height: 16px; }
.ublock { font: bold 7px "Liberation Sans", sans-serif; fill: #fff; text-anchor: middle; }
.tool-sep { width: 1px; height: 32px; background: #6a6e79; margin: 0 -3px 0 -5px; }
.gift { position: relative; }
.gift-dot { position: absolute; right: -2px; top: -3px; width: 6px; height: 6px; border-radius: 50%; background: #1ea7f2; }
.bookmarks { height: 32px; flex: none; background: #4a4e5a; display: flex; align-items: center; gap: 12.200px; padding-left: 12px; color: #c4c7cf; font: 14px "Noto Sans", sans-serif; white-space: nowrap; }
.bm { display: flex; align-items: center; gap: 4px; }
.bm-zip { letter-spacing: .5px; }
.bm-sep { width: 1px; height: 20px; background: #9a9da5; }

/* Jenkins */
.jk-header { height: 57px; flex: none; background: #000; display: flex; align-items: center; padding-left: 16px; color: #fff; }
.jk-logo { width: 30px; height: 46px; }
.jk-brand { font: bold 34px "Liberation Serif", Georgia, serif; margin-left: 10px; padding-bottom: 2px; letter-spacing: .8px; }
.jk-search { margin-left: auto; width: 300px; height: 40px; background: #fff; border-radius: 4px; display: flex; align-items: center; padding: 1px 10px 0 11px; }
.jk-search-i { width: 18px; height: 18px; }
.jk-placeholder { flex: 1; margin-left: 14px; font: 16px Roboto, sans-serif; color: #9a9a9a; }
.jk-help { width: 22px; height: 22px; }
.jk-help-q { font: bold 14px Roboto, sans-serif; fill: #444; text-anchor: middle; }
.jk-links { display: flex; align-items: center; padding: 1px 24px 0 24px; font: 500 16px Roboto, sans-serif; }
.jk-link { display: flex; align-items: center; }
.jk-i { width: 16px; height: 20px; margin-right: 8px; }
.jk-i-out { width: 22px; height: 20px; margin-right: 5px; }
.jk-badge { background: #fff; color: #e6001f; border-radius: 3px; margin-left: 5px; width: 20px; height: 20px; text-align: center; line-height: 20px; }
.jk-admin { margin-left: 24px; }
.jk-logout { margin-left: 29px; }
.crumbs { height: 40px; flex: none; background: #f8f8f8; display: flex; align-items: center; padding: 0 28px; font: 500 16px Roboto, sans-serif; color: #4d545d; position: relative; }
.crumb-arrow { width: 0; height: 0; border-left: 4px solid #b5b5b5; border-top: 4px solid transparent; border-bottom: 4px solid transparent; margin: 0 16px 0 25px; }
.crumb-right { margin-left: auto; text-decoration: underline; }
.cursor { position: absolute; left: 1818px; top: 14px; width: 12px; height: 20px; }
.content { height: 378px; flex: none; background: #e6edf4; padding: 21px 10px 0; }
.pl-title { margin: 0; text-align: center; font: bold 28px/32px "Liberation Sans", Arial, sans-serif; color: #333; }
.actions { display: flex; justify-content: center; margin-top: 22px; }
.action { width: 64px; display: flex; flex-direction: column; align-items: center; font-size: 11px; color: #333; line-height: 13px; }
.action-i { width: 26px; height: 26px; margin: 2px 3px 8px; }
.pipeline { margin-top: 20px; height: 174px; background: #ffad3d; display: flex; align-items: flex-start; padding: 10px 28px 0 10px; }
.pl-head { flex: 0 0 100px; height: 100px; background: #978b80; border-radius: 3px; padding: 4px; box-shadow: 5px 5px 5px #6a5a45; text-align: center; color: #444; font-size: 14px; }
.pl-head-title { height: 27px; line-height: 24px; background: #e0d7cc; }
.pl-head-num { margin-top: 1px; line-height: 16px; color: #4f4a45; }
.pl-stages { flex: 1; margin-left: 20px; display: flex; align-items: flex-start; }
.stage { flex: 1 1 0; position: relative; height: 102px; background: #32cd32; border-radius: 3px; padding: 4px; box-shadow: 5px 5px 5px #6a5a45; font-size: 11px; color: #2d3a28; }
.stage-tall { height: 122px; }
.stage-title { height: 27px; line-height: 24px; padding-left: 6px; margin: 0 0 5px 0; background: #c2ebb3; font-size: 14px; color: #3c4a38; }
.stage-row { height: 20px; display: flex; align-items: center; gap: 3px; }
.stage-icons { position: absolute; right: 4px; bottom: 4px; display: flex; gap: 5px; }
.flow { flex: 0 0 20px; width: 20px; height: 20px; margin: 51px 9.500px 0 10px; }
.blank { flex: 1; background: #fff; }
.jk-footer { height: 44px; flex: none; background: #f8f8f8; border-top: 1px solid #eaeaea; display: flex; justify-content: flex-end; align-items: center; gap: 14px; padding: 0 15px 4px 0; font-size: 12px; color: #444; }
.taskbar { height: 26px; flex: none; background: #2a2d35; display: flex; align-items: stretch; color: #9a9da5; font: 14.400px "Noto Sans", sans-serif; white-space: nowrap; }
.task-grid { width: 14px; height: 14px; margin: 6px 0 0 12px; }
.task-menu { margin-left: 9px; width: 50px; line-height: 26px; }
.task-dots { width: 4px; height: 14px; margin: 6px 5px 0 1px; background: repeating-linear-gradient(#cfd1d6 0 3px, transparent 3px 5.500px); }
.task { display: flex; align-items: center; gap: 8px; }
.task-first { width: 195px; font-size: 14.700px; }
.task-active { width: 198px; padding-left: 4px; background: #1a1c22; border-bottom: 2px solid #4a90d9; color: #f2f3f5; font-size: 14.100px; }
.task-active + .task { margin-left: 4px; }
.task-right { margin-left: auto; display: flex; align-items: stretch; }
.task-sleep { width: 20px; height: 16px; margin: 5px 3px 0 0; }
.task-z { font: bold 9px "Liberation Sans", sans-serif; fill: #222; text-anchor: middle; }
.ws { width: 47px; background: #0f1116; border-right: 1px solid #1a1c22; }
.ws-active { width: 46px; background: #8ab4e8; border-top: 1px solid #4a7ab0; display: flex; align-items: center; justify-content: center; }
.ws-last { width: 48px; border-right: 0; }
.status-tip { position: absolute; left: 0; bottom: 26px; width: 523px; height: 24px; background: #2a2d35; border-radius: 0 3px 0 0; color: #eceef1; font: 14.500px/25px "Noto Sans", sans-serif; padding-left: 4px; white-space: nowrap; }
```
